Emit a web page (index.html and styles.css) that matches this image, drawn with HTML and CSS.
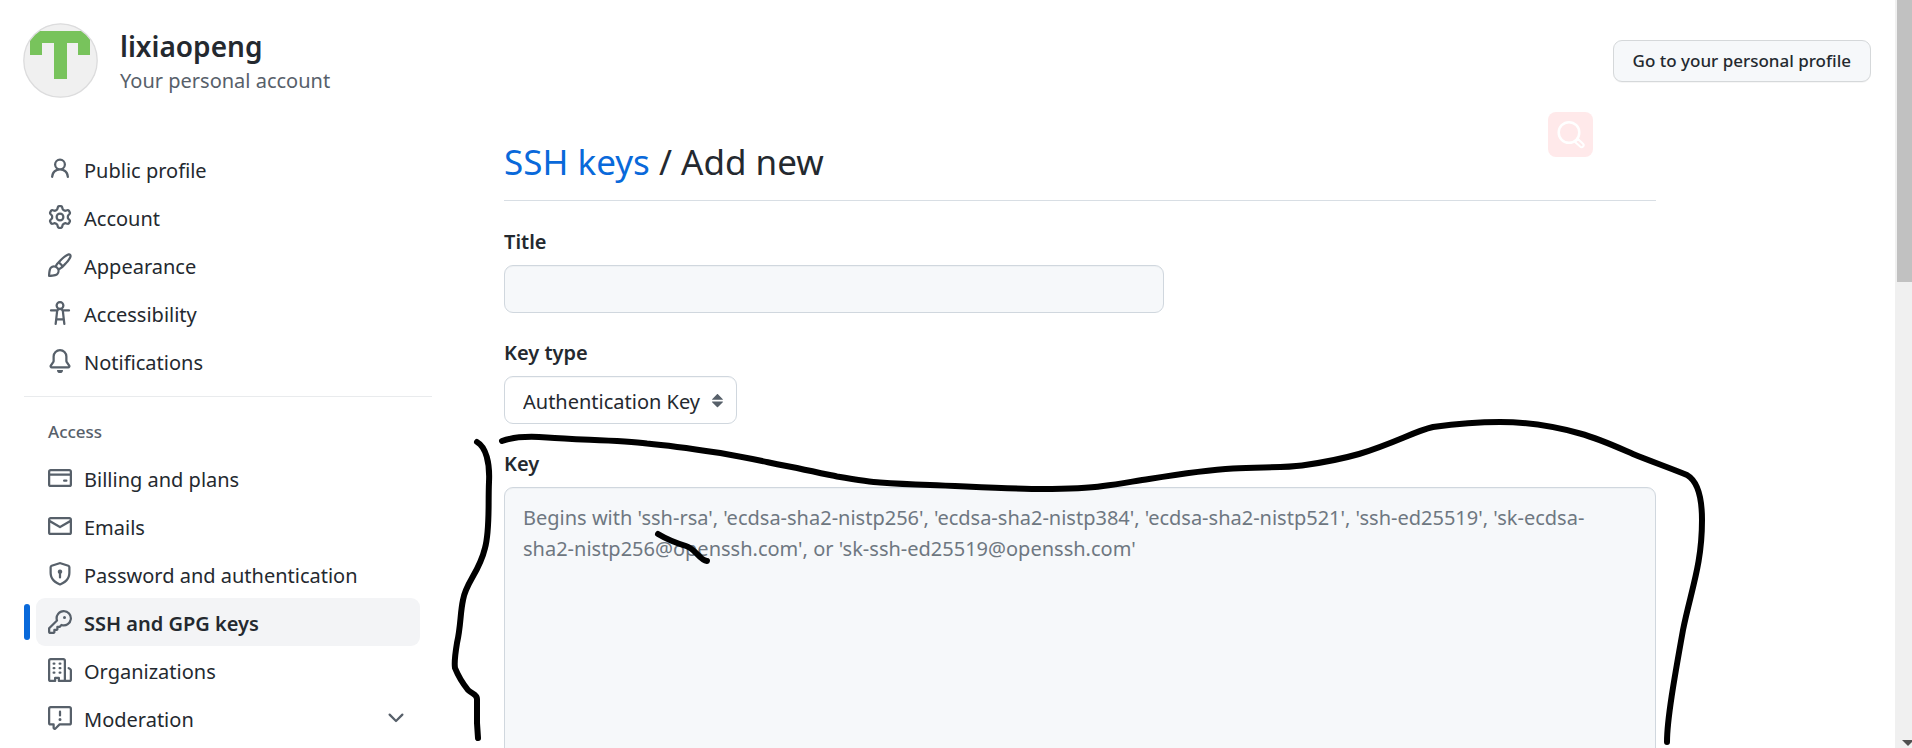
FILE: index.html
```html
<!DOCTYPE html>
<html lang="en">
<head>
<meta charset="utf-8">
<meta name="viewport" content="width=device-width, initial-scale=1">
<title>Add new SSH key</title>
<link rel="stylesheet" href="styles.css">
</head>
<body>
<div class="page">
  <header class="account">
    <svg class="avatar" viewBox="0 0 75 75" aria-hidden="true">
      <defs><clipPath id="round"><circle cx="37.5" cy="37.5" r="36.5"/></clipPath></defs>
      <circle cx="37.5" cy="37.5" r="37" fill="#f0f0f0"/>
      <path clip-path="url(#round)" fill="#78c35c" d="M7 8h60v24h-12V20h-11v36h-13V20h-12v12h-12z"/>
      <circle cx="37.5" cy="37.5" r="36.7" fill="none" stroke="#dcdcdd" stroke-width="1.3"/>
    </svg>
    <div class="who">
      <h1 class="name">lixiaopeng</h1>
      <p class="kind">Your personal account</p>
    </div>
    <button class="profile-button" type="button">Go to your personal profile</button>
  </header>

  <div class="columns">
    <nav class="sidebar" aria-label="Settings">
      <ul class="menu">
        <li><a class="item" href="#"><svg class="icon" viewBox="0 0 16 16"><path d="M10.561 8.073a6.005 6.005 0 0 1 3.432 5.142.75.75 0 1 1-1.498.07 4.5 4.5 0 0 0-8.99 0 .75.75 0 0 1-1.498-.07 6.004 6.004 0 0 1 3.431-5.142 3.999 3.999 0 1 1 5.123 0ZM10.5 5a2.5 2.5 0 1 0-5 0 2.5 2.5 0 0 0 5 0Z"/></svg><span class="item-text">Public profile</span></a></li>
        <li><a class="item" href="#"><svg class="icon" viewBox="0 0 16 16"><path d="M8 0a8.2 8.2 0 0 1 .701.031C9.444.095 9.99.645 10.16 1.29l.288 1.107c.018.066.079.158.212.224.231.114.454.243.668.386.123.082.233.09.299.071l1.103-.303c.644-.176 1.392.021 1.82.63.27.385.506.792.704 1.218.315.675.111 1.422-.364 1.891l-.814.806c-.049.048-.098.147-.088.294.016.257.016.515 0 .772-.01.147.038.246.088.294l.814.806c.475.469.679 1.216.364 1.891a7.977 7.977 0 0 1-.704 1.217c-.428.61-1.176.807-1.82.63l-1.102-.302c-.067-.019-.177-.011-.3.071a5.909 5.909 0 0 1-.668.386c-.133.066-.194.158-.211.224l-.29 1.106c-.168.646-.715 1.196-1.458 1.26a8.006 8.006 0 0 1-1.402 0c-.743-.064-1.289-.614-1.458-1.26l-.289-1.106c-.018-.066-.079-.158-.212-.224a5.738 5.738 0 0 1-.668-.386c-.123-.082-.233-.09-.299-.071l-1.103.303c-.644.176-1.392-.021-1.82-.63a8.12 8.12 0 0 1-.704-1.218c-.315-.675-.111-1.422.363-1.891l.815-.806c.05-.048.098-.147.088-.294a6.214 6.214 0 0 1 0-.772c.01-.147-.038-.246-.088-.294l-.815-.806C.635 6.045.431 5.298.746 4.623a7.92 7.92 0 0 1 .704-1.217c.428-.61 1.176-.807 1.82-.63l1.102.302c.067.019.177.011.3-.071.214-.143.437-.272.668-.386.133-.066.194-.158.211-.224l.29-1.106C6.009.645 6.556.095 7.299.03 7.53.01 7.764 0 8 0Zm-.571 1.525c-.036.003-.108.036-.137.146l-.289 1.105c-.147.561-.549.967-.998 1.189-.173.086-.34.183-.5.29-.417.278-.97.423-1.529.27l-1.103-.303c-.109-.03-.175.016-.195.045-.22.312-.412.644-.573.99-.014.031-.021.11.059.19l.815.806c.411.406.562.957.53 1.456a4.709 4.709 0 0 0 0 .582c.032.499-.119 1.05-.53 1.456l-.815.806c-.081.08-.073.159-.059.19.162.346.353.677.573.989.02.03.085.076.195.046l1.102-.303c.56-.153 1.113-.008 1.53.27.161.107.328.204.501.29.447.222.85.629.997 1.189l.289 1.105c.029.109.101.143.137.146a6.6 6.6 0 0 0 1.142 0c.036-.003.108-.036.137-.146l.289-1.105c.147-.561.549-.967.998-1.189.173-.086.34-.183.5-.29.417-.278.97-.423 1.529-.27l1.103.303c.109.029.175-.016.195-.045.22-.313.411-.644.573-.99.014-.031.021-.11-.059-.19l-.815-.806c-.411-.406-.562-.957-.53-1.456a4.709 4.709 0 0 0 0-.582c-.032-.499.119-1.05.53-1.456l.815-.806c.081-.08.073-.159.059-.19a6.464 6.464 0 0 0-.573-.989c-.02-.03-.085-.076-.195-.046l-1.102.303c-.56.153-1.113.008-1.53-.27a4.44 4.44 0 0 0-.501-.29c-.447-.222-.85-.629-.997-1.189l-.289-1.105c-.029-.11-.101-.143-.137-.146a6.6 6.6 0 0 0-1.142 0ZM11 8a3 3 0 1 1-6 0 3 3 0 0 1 6 0ZM9.5 8a1.5 1.5 0 1 0-3.001.001A1.5 1.5 0 0 0 9.5 8Z"/></svg><span class="item-text">Account</span></a></li>
        <li><a class="item" href="#"><svg class="icon" viewBox="0 0 16 16"><path d="M11.134 1.535c.7-.509 1.416-.942 2.076-1.155.649-.21 1.463-.267 2.069.34.603.601.568 1.411.368 2.07-.202.668-.624 1.39-1.125 2.096-1.011 1.424-2.496 2.987-3.775 4.249-1.098 1.084-2.132 1.839-3.04 2.3a3.744 3.744 0 0 1-1.055 3.217c-.431.431-1.065.691-1.657.861-.614.177-1.294.287-1.914.357A21.151 21.151 0 0 1 .797 16H.743l.007-.75H.749L.742 16a.75.75 0 0 1-.743-.742l.743-.008-.742.007v-.054a21.25 21.25 0 0 1 .13-2.284c.067-.647.187-1.287.358-1.914.17-.591.43-1.226.86-1.657a3.746 3.746 0 0 1 3.227-1.054c.466-.893 1.225-1.907 2.314-2.982 1.271-1.255 2.833-2.75 4.245-3.777ZM1.62 13.089c-.051.464-.086.929-.104 1.395.466-.018.932-.053 1.396-.104a10.511 10.511 0 0 0 1.668-.309c.526-.151.856-.325 1.011-.48a2.25 2.25 0 1 0-3.182-3.182c-.155.155-.329.485-.48 1.01a10.515 10.515 0 0 0-.309 1.67Zm10.396-10.34c-1.224.89-2.605 2.189-3.822 3.384l1.718 1.718c1.21-1.205 2.51-2.597 3.387-3.833.47-.662.78-1.227.912-1.662.134-.444.032-.551.009-.575h-.001V1.78c-.014-.014-.113-.113-.548.027-.432.14-.995.462-1.655.942Zm-4.832 7.266-.001.001a9.859 9.859 0 0 0 1.63-1.142L7.155 7.216a9.7 9.7 0 0 0-1.161 1.607c.482.302.889.71 1.19 1.192Z"/></svg><span class="item-text">Appearance</span></a></li>
        <li><a class="item" href="#"><svg class="icon" viewBox="0 0 16 16"><path d="M9.923 5.302c.063.063.122.129.178.198H14A.75.75 0 0 1 14 7h-3.3l.578 5.163.362 2.997a.75.75 0 0 1-1.49.18L9.868 13H6.132l-.282 2.34a.75.75 0 0 1-1.49-.18l.362-2.997L5.3 7H2a.75.75 0 0 1 0-1.5h3.9a2.54 2.54 0 0 1 .176-.198 3 3 0 1 1 3.847 0ZM9.2 7.073h-.001a1.206 1.206 0 0 0-2.398 0L6.305 11.5h3.39ZM9.5 3a1.5 1.5 0 1 0-3.001.001A1.5 1.5 0 0 0 9.5 3Z"/></svg><span class="item-text">Accessibility</span></a></li>
        <li><a class="item" href="#"><svg class="icon" viewBox="0 0 16 16"><path d="M8 16a2 2 0 0 0 1.985-1.75c.017-.137-.097-.25-.235-.25h-3.5c-.138 0-.252.113-.235.25A2 2 0 0 0 8 16ZM3 5a5 5 0 0 1 10 0v2.947c0 .05.015.098.042.139l1.703 2.555A1.519 1.519 0 0 1 13.482 13H2.518a1.516 1.516 0 0 1-1.263-2.36l1.703-2.554A.255.255 0 0 0 3 7.947Zm5-3.5A3.5 3.5 0 0 0 4.5 5v2.947c0 .346-.102.683-.294.97l-1.703 2.556a.017.017 0 0 0-.003.01l.001.006c0 .002.002.004.004.006l.006.004.007.001h10.964l.007-.001.006-.004.004-.006.001-.007a.017.017 0 0 0-.003-.01l-1.703-2.554a1.745 1.745 0 0 1-.294-.97V5A3.5 3.5 0 0 0 8 1.5Z"/></svg><span class="item-text">Notifications</span></a></li>
      </ul>
      <h2 class="group-title">Access</h2>
      <ul class="menu">
        <li><a class="item" href="#"><svg class="icon" viewBox="0 0 16 16"><path d="M10.75 9a.75.75 0 0 0 0 1.5h1.5a.75.75 0 0 0 0-1.5h-1.5ZM0 3.75C0 2.784.784 2 1.75 2h12.5c.966 0 1.75.784 1.75 1.75v8.5A1.75 1.75 0 0 1 14.25 14H1.75A1.75 1.75 0 0 1 0 12.25ZM14.5 6.5h-13v5.75c0 .138.112.25.25.25h12.5a.25.25 0 0 0 .25-.25Zm0-2.75a.25.25 0 0 0-.25-.25H1.75a.25.25 0 0 0-.25.25V5h13Z"/></svg><span class="item-text">Billing and plans</span></a></li>
        <li><a class="item" href="#"><svg class="icon" viewBox="0 0 16 16"><path d="M1.75 2h12.5c.966 0 1.75.784 1.75 1.75v8.5A1.75 1.75 0 0 1 14.25 14H1.75A1.75 1.75 0 0 1 0 12.25v-8.5C0 2.784.784 2 1.75 2ZM1.5 12.251c0 .138.112.25.25.25h12.5a.25.25 0 0 0 .25-.25V5.809L8.38 9.397a.75.75 0 0 1-.76 0L1.5 5.809v6.442Zm13-8.181v-.32a.25.25 0 0 0-.25-.25H1.75a.25.25 0 0 0-.25.25v.32L8 7.88Z"/></svg><span class="item-text">Emails</span></a></li>
        <li><a class="item" href="#"><svg class="icon" viewBox="0 0 16 16"><path d="m8.533.133 5.25 1.68A1.75 1.75 0 0 1 15 3.48V7c0 1.566-.32 3.182-1.303 4.682-.983 1.498-2.585 2.813-5.032 3.855a1.697 1.697 0 0 1-1.33 0c-2.447-1.042-4.049-2.357-5.032-3.855C1.32 10.182 1 8.566 1 7V3.48a1.755 1.755 0 0 1 1.217-1.667l5.25-1.68a1.748 1.748 0 0 1 1.066 0Zm-.61 1.429.001.001-5.25 1.68a.251.251 0 0 0-.174.237V7c0 1.36.275 2.666 1.057 3.859.784 1.194 2.121 2.342 4.366 3.298a.196.196 0 0 0 .154 0c2.245-.957 3.582-2.103 4.366-3.297C13.225 9.666 13.5 8.358 13.5 7V3.48a.25.25 0 0 0-.174-.238l-5.25-1.68a.25.25 0 0 0-.153 0ZM9.5 6.5c0 .536-.286 1.032-.75 1.3v2.45a.75.75 0 0 1-1.5 0V7.8A1.5 1.5 0 1 1 9.5 6.5Z"/></svg><span class="item-text">Password and authentication</span></a></li>
        <li><a class="item current" href="#" aria-current="page"><svg class="icon" viewBox="0 0 16 16"><path d="M10.5 0a5.499 5.499 0 1 1-1.288 10.848l-.932.932a.749.749 0 0 1-.53.22H7v.75a.749.749 0 0 1-.22.53l-.5.5a.749.749 0 0 1-.53.22H5v.75a.749.749 0 0 1-.22.53l-.5.5a.749.749 0 0 1-.53.22h-2A1.75 1.75 0 0 1 0 14.25v-2c0-.199.079-.389.22-.53l4.932-4.932A5.5 5.5 0 0 1 10.5 0Zm-4 5.5c-.001.431.069.86.205 1.269a.75.75 0 0 1-.181.768L1.5 12.56v1.69c0 .138.112.25.25.25h1.69l.06-.06v-1.19a.75.75 0 0 1 .75-.75h1.19l.06-.06v-1.19a.75.75 0 0 1 .75-.75h1.19l1.023-1.025a.75.75 0 0 1 .768-.18A4 4 0 1 0 6.5 5.5ZM11 6a1 1 0 1 1 0-2 1 1 0 0 1 0 2Z"/></svg><span class="item-text">SSH and GPG keys</span></a></li>
        <li><a class="item" href="#"><svg class="icon" viewBox="0 0 16 16"><path d="M1.75 16A1.75 1.75 0 0 1 0 14.25V1.75C0 .784.784 0 1.75 0h8.5C11.216 0 12 .784 12 1.75v12.5c0 .085-.006.168-.018.25h2.268a.25.25 0 0 0 .25-.25V8.285a.25.25 0 0 0-.111-.208l-1.055-.703a.749.749 0 1 1 .832-1.248l1.055.703c.487.325.779.871.779 1.456v5.965A1.75 1.75 0 0 1 14.25 16h-3.5a.766.766 0 0 1-.197-.026c-.099.017-.2.026-.303.026h-3a.75.75 0 0 1-.75-.75V14h-1v1.25a.75.75 0 0 1-.75.75Zm-.25-1.75c0 .138.112.25.25.25H4v-1.25a.75.75 0 0 1 .75-.75h2.5a.75.75 0 0 1 .75.75v1.25h2.25a.25.25 0 0 0 .25-.25V1.75a.25.25 0 0 0-.25-.25h-8.5a.25.25 0 0 0-.25.25ZM3.75 6h.5a.75.75 0 0 1 0 1.5h-.5a.75.75 0 0 1 0-1.5ZM3 3.75A.75.75 0 0 1 3.75 3h.5a.75.75 0 0 1 0 1.5h-.5A.75.75 0 0 1 3 3.75Zm4 3A.75.75 0 0 1 7.75 6h.5a.75.75 0 0 1 0 1.5h-.5A.75.75 0 0 1 7 6.75ZM7.75 3h.5a.75.75 0 0 1 0 1.5h-.5a.75.75 0 0 1 0-1.5ZM3 9.75A.75.75 0 0 1 3.75 9h.5a.75.75 0 0 1 0 1.5h-.5A.75.75 0 0 1 3 9.75ZM7.75 9h.5a.75.75 0 0 1 0 1.5h-.5a.75.75 0 0 1 0-1.5Z"/></svg><span class="item-text">Organizations</span></a></li>
        <li><button class="item" type="button" aria-expanded="false"><svg class="icon" viewBox="0 0 16 16"><path d="M0 1.75C0 .784.784 0 1.75 0h12.5C15.216 0 16 .784 16 1.75v9.5A1.75 1.75 0 0 1 14.25 13H8.06l-2.573 2.573A1.458 1.458 0 0 1 3 14.543V13H1.75A1.75 1.75 0 0 1 0 11.25Zm1.75-.25a.25.25 0 0 0-.25.25v9.5c0 .138.112.25.25.25h2a.75.75 0 0 1 .75.75v2.19l2.72-2.72a.749.749 0 0 1 .53-.22h6.5a.25.25 0 0 0 .25-.25v-9.5a.25.25 0 0 0-.25-.25Zm7 2.25v2.5a.75.75 0 0 1-1.5 0v-2.5a.75.75 0 0 1 1.5 0ZM9 9a1 1 0 1 1-2 0 1 1 0 0 1 2 0Z"/></svg><span class="item-text">Moderation</span><svg class="icon chevron" viewBox="0 0 16 16"><path d="M12.78 5.22a.749.749 0 0 1 0 1.06l-4.25 4.25a.749.749 0 0 1-1.06 0L3.22 6.28a.749.749 0 1 1 1.06-1.06L8 8.939l3.72-3.719a.749.749 0 0 1 1.06 0Z"/></svg></button></li>
      </ul>
    </nav>

    <main class="main">
      <h2 class="title"><a class="title-link" href="#">SSH keys</a> / Add new</h2>
      <form class="form">
        <div class="field">
          <label class="label" for="key-title">Title</label>
          <input class="control text-box" id="key-title" type="text">
        </div>
        <div class="field">
          <label class="label" for="key-type">Key type</label>
          <div class="select-wrap">
            <select class="control select" id="key-type"><option>Authentication Key</option><option>Signing Key</option></select>
            <svg class="icon arrows" viewBox="0 0 16 16" aria-hidden="true"><path d="m4.074 9.427 3.396 3.396a.25.25 0 0 0 .354 0l3.396-3.396A.25.25 0 0 0 11.043 9H4.251a.25.25 0 0 0-.177.427zM4.074 7.47 7.47 4.073a.25.25 0 0 1 .354 0L11.22 7.47a.25.25 0 0 1-.177.426H4.251a.25.25 0 0 1-.177-.426z"/></svg>
          </div>
        </div>
        <div class="field">
          <label class="label" for="key-body">Key</label>
          <textarea class="control key-box" id="key-body" rows="11" placeholder="Begins with 'ssh-rsa', 'ecdsa-sha2-nistp256', 'ecdsa-sha2-nistp384', 'ecdsa-sha2-nistp521', 'ssh-ed25519', 'sk-ecdsa-sha2-nistp256@openssh.com', or 'sk-ssh-ed25519@openssh.com'"></textarea>
        </div>
      </form>
    </main>
  </div>

  <button class="search-badge" type="button" aria-label="Search">
    <svg class="search-glyph" viewBox="0 0 45 45" fill="none" stroke="#fff"><circle cx="21" cy="20.500" r="10.300" stroke-width="2.500"/><path d="M27 30l3-3 5 4.700a2 2 0 0 1-2.800 2.900z" stroke-width="2" stroke-linejoin="round"/></svg>
  </button>

  <svg class="ink" viewBox="0 0 1912 748" aria-hidden="true">
    <path d="M502 441C513 437 528 436 547 437.500C580 440 620 440 647 443.500C675 446 700 450 723 453.500C750 458 775 464 797 468C815 472 825 474 837 476.500C855 479.500 870 482 880 482.500C900 484 915 484.500 930 485C980 487 1020 489 1042 489C1068 489 1090 488 1103 486C1120 484 1135 481 1149 479C1180 474 1205 470 1233 468.500C1260 467 1283 468 1302 465.500C1320 463 1345 458 1359 454C1395 443 1415 431 1433 427C1455 424 1480 422 1500 422C1530 422 1560 428 1580 433.500C1600 439 1617 447 1633 454C1650 461 1670 468 1687 475C1699 482 1702 500 1702 520C1702 565 1691 590 1683 630C1674 680 1667 720 1667 742"/>
    <path d="M477 442C486 447 490 463 489 482C488 505 490 530 485 548C479 573 466 582 463 600C460 614 461 625 457 643C455 655 454 662 455 668C459 678 464 685 468 690C472 694 477 694 477 699V723L478 738"/>
    <path d="M658 534C668 540 676 543 686 546C696 549 699 560 707 561"/>
  </svg>
</div>
<div class="scrollbar" aria-hidden="true"><div class="thumb"></div><svg class="scroll-arrow" viewBox="0 0 12 6"><path d="M0 0h12L6 6z"/></svg></div>
</body>
</html>
```
FILE: styles.css
```css
* { box-sizing: border-box; }

body {
  display: flex;
  height: 100vh;
  margin: 0;
  overflow: hidden;
  background: #fff;
  color: #24292f;
  font: 20px/31px "Noto Sans", "Open Sans", sans-serif;
}

button, input, select, textarea { font: inherit; color: inherit; }
a { color: inherit; text-decoration: none; }
h1, h2, p, ul { margin: 0; padding: 0; }
ul { list-style: none; }

.page {
  position: relative;
  flex: 1;
  min-width: 0;
  overflow: hidden;
}

.account {
  display: flex;
  align-items: center;
  gap: 22px;
  padding: 23px 24px 0 23px;
}
.avatar { width: 75px; height: 75px; flex: none; }
.who { flex: 1; padding-top: 2px; }
.name { font-size: 28px; line-height: 38px; font-weight: 600; }
.kind { color: #57606a; line-height: 31px; }

.profile-button {
  height: 42px;
  padding: 0 19px;
  border: 1px solid #d5d8da;
  border-radius: 9px;
  background: #f6f8fa;
  box-shadow: 0 1px 0 rgba(27, 31, 36, 0.04);
  font-size: 17px;
  line-height: 30px;
  font-weight: 500;
}

.columns {
  display: grid;
  grid-template-columns: 408px minmax(0, 1152px);
  gap: 72px;
  padding: 35px 24px 0;
}

.sidebar { padding-top: 12px; }
.menu { padding: 0 12px; }
.item {
  position: relative;
  display: flex;
  align-items: center;
  gap: 12px;
  width: 100%;
  height: 48px;
  padding: 0 12px;
  border: 0;
  border-radius: 9px;
  background: none;
  text-align: left;
}
.item-text { padding-top: 2px; }
.current { background: #f3f4f6; font-weight: 600; }
.current::before {
  content: "";
  position: absolute;
  left: -12px;
  top: 6px;
  width: 6px;
  height: 36px;
  border-radius: 9px;
  background: #0969da;
}
.icon { width: 24px; height: 24px; flex: none; fill: #57606a; }
.chevron { margin-left: auto; }
.group-title {
  margin-top: 11px;
  padding: 21px 24px 9px;
  border-top: 1px solid #e9ebed;
  color: #57606a;
  font-size: 17px;
  line-height: 27px;
  font-weight: 500;
}

.title {
  padding: 2px 0 11px;
  border-bottom: 1px solid #d8dee4;
  font-size: 35px;
  line-height: 54px;
  font-weight: 400;
}
.title-link { color: #0969da; }

.form {
  display: grid;
  gap: 24px;
  padding-top: 25px;
}
.field {
  display: grid;
  gap: 8px;
  justify-items: start;
}
.label { font-weight: 600; }
.control {
  border: 1px solid #d0d7de;
  border-radius: 9px;
  background: #f6f8fa;
  box-shadow: inset 0 1px 0 rgba(208, 215, 222, 0.2);
}
.text-box { width: 660px; max-width: 100%; height: 48px; padding: 0 18px; }
.select-wrap { position: relative; }
.select {
  display: block;
  height: 48px;
  padding: 2px 35px 0 18px;
  appearance: none;
  background: #fff;
}
.arrows { position: absolute; right: 7px; top: 12px; pointer-events: none; }
.key-box {
  display: block;
  width: 100%;
  padding: 14px 24px 14px 18px;
  resize: none;
}
.key-box::placeholder { color: #6e7781; opacity: 1; }

.search-badge {
  position: absolute;
  top: 112px;
  right: 302px;
  width: 45px;
  height: 45px;
  padding: 0;
  border: 0;
  border-radius: 8px;
  background: #ffe9ea;
}
.search-glyph { display: block; width: 45px; height: 45px; }

/* Freehand marks drawn over the page */
.ink {
  position: absolute;
  left: 0;
  top: 0;
  width: 1912px;
  height: 748px;
  fill: none;
  stroke: #000;
  stroke-width: 6;
  stroke-linecap: round;
  stroke-linejoin: round;
  pointer-events: none;
}

.scrollbar {
  display: flex;
  flex-direction: column;
  justify-content: space-between;
  width: 17px;
  flex: none;
  padding: 0 0 2px 2px;
  background: #f0f0f0;
}
.thumb { height: 282px; background: #c1c1c1; }
.scroll-arrow { width: 12px; height: 6px; margin-left: 5px; fill: #505050; }
```
